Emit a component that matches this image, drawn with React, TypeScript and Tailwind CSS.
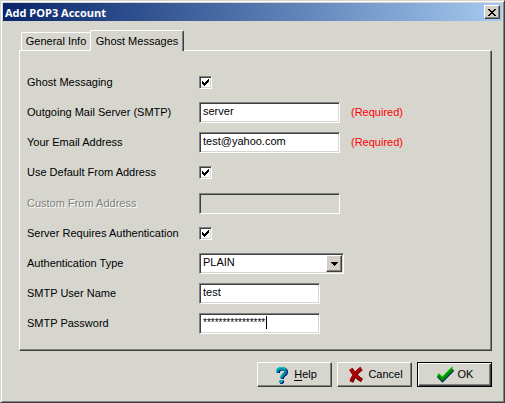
import { useState, type ReactNode } from "react";
import clsx from "clsx";

const sunken =
  "border border-t-[#808080] border-l-[#808080] border-r-white border-b-white shadow-[inset_1px_1px_#404040,inset_-1px_-1px_#d6d6ce]";
const raised =
  "border border-t-white border-l-white border-r-[#404040] border-b-[#404040] shadow-[inset_-1px_-1px_#808080]";

function Row({
  id,
  label,
  disabled,
  children,
}: {
  id: string;
  label: string;
  disabled?: boolean;
  children: ReactNode;
}) {
  return (
    <div className="flex h-[21px] items-center">
      <label
        htmlFor={id}
        className={clsx(
          "w-[172px] shrink-0",
          disabled && "text-[#808080] [text-shadow:1px_1px_#fff]"
        )}
      >
        {label}
      </label>
      {children}
    </div>
  );
}

function CheckBox({ id }: { id: string }) {
  const [checked, setChecked] = useState(true);

  return (
    <span className="grid">
      <input
        id={id}
        type="checkbox"
        checked={checked}
        onChange={(e) => setChecked(e.target.checked)}
        className={clsx(
          "col-start-1 row-start-1 size-[13px] appearance-none bg-white outline-none",
          sunken
        )}
      />
      {checked && (
        <svg
          viewBox="0 0 13 13"
          shapeRendering="crispEdges"
          className="pointer-events-none col-start-1 row-start-1 size-[13px]"
        >
          <path d="M3 5h1v1h1v1h1v-1h1v-1h1v-1h1v-1h1v3h-1v1h-1v1h-1v1h-1v1h-1v-1h-1v-1h-1z" />
        </svg>
      )}
    </span>
  );
}

function TextBox({
  id,
  value,
  disabled,
  className,
}: {
  id: string;
  value: string;
  disabled?: boolean;
  className: string;
}) {
  return (
    <input
      id={id}
      type="text"
      defaultValue={value}
      disabled={disabled}
      className={clsx(
        "h-[21px] px-[3px] pb-[3px] outline-none",
        disabled ? "bg-[#d6d6ce]" : "bg-white",
        sunken,
        className
      )}
    />
  );
}

function Required() {
  return <span className="ml-[11px] text-[#ff0000]">(Required)</span>;
}

function DialogButton({
  icon,
  isDefault,
  children,
}: {
  icon: ReactNode;
  isDefault?: boolean;
  children: ReactNode;
}) {
  return (
    <button
      type="button"
      className={clsx(
        "flex h-[25px] w-[75px] items-center justify-center gap-1",
        isDefault
          ? "border border-black shadow-[inset_1px_1px_#fff,inset_-1px_-1px_#404040,inset_-2px_-2px_#808080]"
          : raised
      )}
    >
      {icon}
      <span>{children}</span>
    </button>
  );
}

function HelpIcon() {
  const hook = "M5.5 7.5V6Q6 3.5 9.5 3.5Q13.5 3.5 13.5 6.5Q13.5 8.5 11.5 9.5Q9.5 10.8 9.5 13.5";
  return (
    <svg viewBox="0 0 18 19" className="h-[19px] w-[18px]" fill="none">
      <path d={hook} stroke="#000080" strokeWidth="3" transform="translate(1 .5)" />
      <path d={hook} stroke="#009098" strokeWidth="3" />
      <path d="M4.5 6.5V5Q6 2.5 9.5 2.5Q12 2.5 13 4" stroke="#00d8d8" />
      <path d="M8.5 12.5Q8.5 10.5 11 8.8" stroke="#00c8c8" />
      <path d="M8 15.5h4v2.5h-1v1h-3z" fill="#000080" />
      <path d="M7 15.5h4v2h-1v1h-2v-1h-1z" fill="#009098" />
      <path d="M8 15.5h2v1h-2z" fill="#00d8d8" />
    </svg>
  );
}

function CancelIcon() {
  return (
    <svg viewBox="0 0 18 19" className="h-[19px] w-[18px]" fill="none">
      <path d="M5 4Q9 11.5 16 15.5M15.5 3.5Q8.5 8.5 5.5 17" stroke="#700000" strokeWidth="4" />
      <path d="M4.5 4Q9 10.5 15.5 14.8M15 3.5Q8 8.5 4.8 16" stroke="#a80000" strokeWidth="2.8" />
      <path d="M4 4L7.5 8.5M15 3L11 6.5" stroke="#d80000" />
    </svg>
  );
}

function OkIcon() {
  return (
    <svg viewBox="0 0 18 19" className="h-[19px] w-[18px]" fill="none">
      <path d="M2 11L6.5 15.5L17 4.8" stroke="#000080" strokeWidth="3" />
      <path d="M2 10L6.5 14L16.5 3.8" stroke="#008c00" strokeWidth="3.6" />
      <path d="M1.5 9L3 8.8L6.5 12L15.5 2.5H17" stroke="#00e800" />
    </svg>
  );
}

export default function App() {
  return (
    <div className="min-h-screen border border-t-[#d6d6ce] border-r-[#404040] border-b-[#404040] border-l-[#d6d6ce] bg-[#d6d6ce] p-[2px] font-['Liberation_Sans',Arial,sans-serif] text-[11px] leading-[13px] text-black shadow-[inset_1px_1px_#fff,inset_-1px_-1px_#808080]">
      <header className="flex h-[18px] items-center justify-between bg-linear-to-r from-[#0a246a] to-[#a6caf0] px-[2px]">
        <h1 className="font-['Open_Sans',Tahoma,sans-serif] font-bold text-white">
          Add POP3 Account
        </h1>
        <button
          type="button"
          aria-label="Close"
          className={clsx("flex h-[14px] w-4 items-center justify-center bg-[#d4d0c8]", raised)}
        >
          <svg viewBox="0 0 8 7" shapeRendering="crispEdges" className="h-[7px] w-2">
            <path d="M0 0h2v1h1v1h2v-1h1v-1h2v1h-1v1h-1v1h-1v1h1v1h1v1h1v1h-2v-1h-1v-1h-2v1h-1v1h-2v-1h1v-1h1v-1h1v-1h-1v-1h-1v-1h-1z" />
          </svg>
        </button>
      </header>

      <main className="pt-[9px] pr-[10px] pb-3 pl-4">
        <div role="tablist" className="flex items-end pl-[2px]">
          <button
            type="button"
            role="tab"
            aria-selected="false"
            className="h-[18px] w-[69px] rounded-tl-[2px] border-t border-l border-white"
          >
            General Info
          </button>
          <button
            type="button"
            role="tab"
            aria-selected="true"
            className="relative -mb-px h-[21px] w-[94px] rounded-t-[2px] border-t border-r border-l border-t-white border-r-[#404040] border-l-white bg-[#d6d6ce] shadow-[inset_-1px_0_#808080]"
          >
            Ghost Messages
          </button>
        </div>

        <form
          className={clsx("flex flex-col gap-[10px] px-[7px] pt-[21px] pb-4", raised)}
          onSubmit={(e) => e.preventDefault()}
        >
          <div className="flex flex-col gap-[9px]">
            <Row id="ghost" label="Ghost Messaging">
              <CheckBox id="ghost" />
            </Row>
            <Row id="server" label="Outgoing Mail Server (SMTP)">
              <TextBox id="server" value="server" className="w-[141px]" />
              <Required />
            </Row>
            <Row id="email" label="Your Email Address">
              <TextBox id="email" value="test@yahoo.com" className="w-[141px]" />
              <Required />
            </Row>
            <Row id="default-from" label="Use Default From Address">
              <CheckBox id="default-from" />
            </Row>
          </div>

          <div className="flex flex-col gap-[9px]">
            <Row id="custom-from" label="Custom From Address" disabled>
              <TextBox id="custom-from" value="" disabled className="w-[141px]" />
            </Row>
            <Row id="auth" label="Server Requires Authentication">
              <CheckBox id="auth" />
            </Row>
            <Row id="auth-type" label="Authentication Type">
              <div className="relative">
                <select
                  id="auth-type"
                  defaultValue="PLAIN"
                  className={clsx(
                    "block h-[21px] w-[145px] appearance-none bg-white px-[3px] pb-[3px] outline-none",
                    sunken
                  )}
                >
                  <option>PLAIN</option>
                </select>
                <span
                  className={clsx(
                    "pointer-events-none absolute top-[2px] right-[2px] flex h-[17px] w-4 items-center justify-center bg-[#d4d0c8]",
                    raised
                  )}
                >
                  <svg viewBox="0 0 7 4" shapeRendering="crispEdges" className="h-1 w-[7px]">
                    <path d="M0 0h7v1h-1v1h-1v1h-1v1h-1v-1h-1v-1h-1v-1h-1z" />
                  </svg>
                </span>
              </div>
            </Row>
            <Row id="user" label="SMTP User Name">
              <TextBox id="user" value="test" className="w-[121px]" />
            </Row>
            <Row id="password" label="SMTP Password">
              <div className="relative flex">
                <TextBox id="password" value="****************" className="w-[121px] text-[10px]" />
                <span className="pointer-events-none absolute top-[3px] left-[67px] h-[13px] w-px bg-black" />
              </div>
            </Row>
          </div>
        </form>

        <div className="mt-[11px] flex justify-end gap-[5px]">
          <DialogButton icon={<HelpIcon />}>
            <span className="underline underline-offset-2">H</span>elp
          </DialogButton>
          <DialogButton icon={<CancelIcon />}>Cancel</DialogButton>
          <DialogButton icon={<OkIcon />} isDefault>
            OK
          </DialogButton>
        </div>
      </main>
    </div>
  );
}
